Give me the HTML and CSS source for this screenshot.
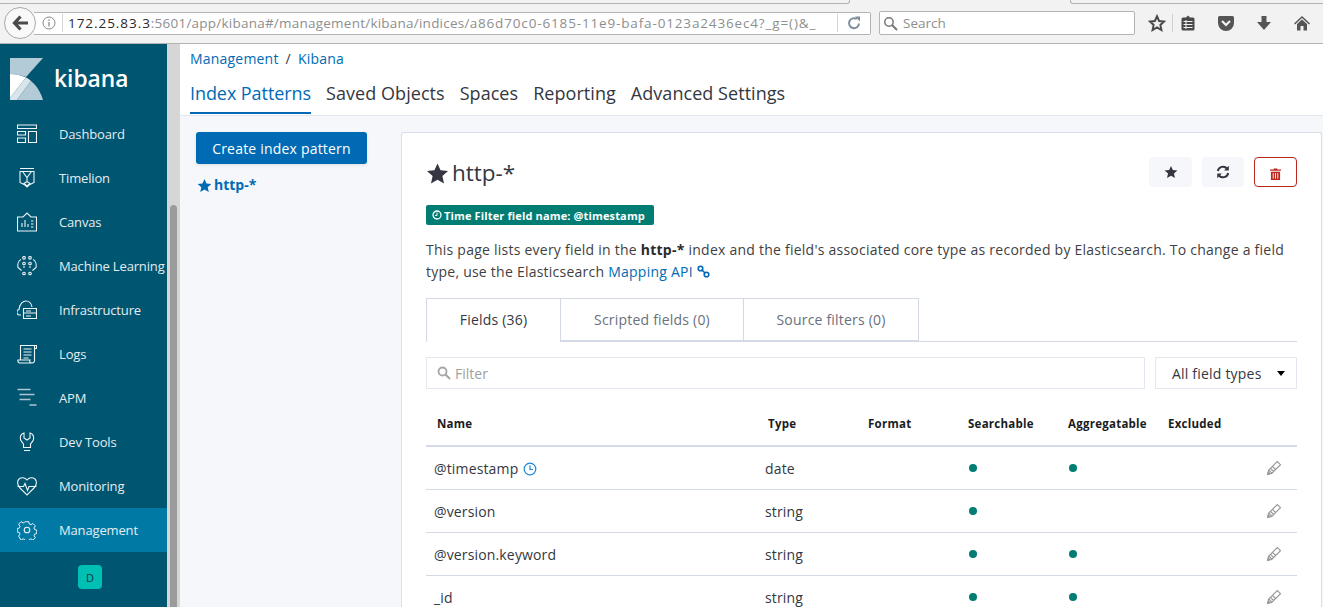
FILE: index.html
```html
<!DOCTYPE html>
<html lang="en">
<head>
<meta charset="utf-8">
<title>Kibana</title>
<link rel="stylesheet" href="styles.css">
</head>
<body>
<svg class="defs" width="0" height="0" aria-hidden="true">
  <defs>
    <symbol id="star" viewBox="0 0 24 24"><path d="M12 1.500l3.200 7.200 7.800.8-5.900 5.200 1.700 7.700L12 18.400l-6.800 4 1.700-7.700L1 9.500l7.800-.8z"/></symbol>
    <symbol id="pencil" viewBox="0 0 16 16"><path d="M1.500 14.500l1-4.300L11.300 1.500l3.200 3.200-8.800 8.800zM2.800 10l3.200 3.200M4.600 8.500l2.900 2.900M6.600 6.500l2.900 2.900" fill="none" stroke="#969696" stroke-width="1.100"/><path d="M1.500 14.500l.8-3.400 2.600 2.600z" fill="#969696"/></symbol>
  </defs>
</svg>

<header class="browser">
  <div class="back">
    <svg width="18" height="18" viewBox="0 0 18 18"><path d="M9.500 2.500L3.500 9l6 6.500M4 9h13" fill="none" stroke="#4a4a4a" stroke-width="3.200"/></svg>
  </div>
  <div class="url">
    <svg class="info" width="14" height="14" viewBox="0 0 14 14"><circle cx="7" cy="7" r="6" fill="none" stroke="#8a8a8a"/><path d="M7 6v4.500M7 3.500v1.500" stroke="#8a8a8a" stroke-width="1.300"/></svg>
    <span class="url-text"><b>172.25.83.3</b>:5601/app/kibana#/management/kibana/indices/<span class="url-id">a86d70c0-6185-11e9-bafa-0123a2436ec4?_g=()&amp;_</span></span>
    <svg class="reload" width="14" height="14" viewBox="0 0 14 14"><path d="M12 7.500A5 5 0 1 1 9.800 3" fill="none" stroke="#7e8c99" stroke-width="2"/><path d="M8 .5h5v5z" fill="#7e8c99"/></svg>
  </div>
  <div class="search">
    <svg width="15" height="15" viewBox="0 0 15 15"><circle cx="6" cy="6" r="4.200" fill="none" stroke="#777" stroke-width="1.500"/><path d="M9 9l5 5" stroke="#777" stroke-width="2"/></svg>
    <span>Search</span>
  </div>
  <div class="tools">
    <svg class="t-star" width="18" height="18" viewBox="0 0 24 24"><path d="M12 3l2.800 6.300 6.700.7-5 4.600 1.400 6.700-5.900-3.400-5.900 3.400 1.400-6.700-5-4.600 6.700-.7z" fill="none" stroke="#4a4a4a" stroke-width="2.600"/></svg>
    <i class="t-sep"></i>
    <svg class="t-clip" width="14" height="16" viewBox="0 0 14 16"><path d="M2 2.500h3L7 .5l2 2h3a1.500 1.500 0 0 1 1.500 1.500v10a1.500 1.500 0 0 1-1.500 1.500H2A1.500 1.500 0 0 1 .5 14V4A1.500 1.500 0 0 1 2 2.500z" fill="#4a4a4a"/><path d="M2.500 6.500h9M2.500 9.500h9M2.500 12.500h9M5 5v9" stroke="#f2f2f2"/></svg>
    <svg class="t-pocket" width="16" height="15" viewBox="0 0 16 15"><path d="M1.500 0h13A1.500 1.500 0 0 1 16 1.500V7A8 8 0 0 1 0 7V1.500A1.500 1.500 0 0 1 1.500 0z" fill="#555"/><path d="M4 5l4 4 4-4" fill="none" stroke="#f2f2f2" stroke-width="2.200"/></svg>
    <svg class="t-down" width="16" height="16" viewBox="0 0 16 16"><path d="M5.500 1h5v6H15l-7 8-7-8h4.500z" fill="#555"/></svg>
    <svg class="t-home" width="16" height="15" viewBox="0 0 16 15"><path d="M8 0l8 7.500-1 1L8 2 1 8.500l-1-1z" fill="#555"/><path d="M8 3.500l5 4.500v6.500H9.500V10h-3v4.500H3V8z" fill="#555"/></svg>
  </div>
</header>

<div class="app">
  <nav class="side">
    <div class="brand">
      <svg width="33" height="42" viewBox="0 0 33 42">
        <path d="M0 0h33L16 19C11 17 5 16 0 16z" fill="#b3cbd6"/>
        <path d="M0 16c5 0 11 1 16 3.500L0 40z" fill="#fff"/>
        <path d="M16 19.500c2 1 3.500 2 5 3.500L7 42H0v-2z" fill="#d9e5ea"/>
        <path d="M21 23c6 5 10 12 12 19H7z" fill="#b3cbd6"/>
      </svg>
      <span>kibana</span>
    </div>
    <a class="item"><svg class="ico" viewBox="0 0 20 20"><path d="M.5 1h19v3.500H.5zM.5 7.500h8v3.500h-8zM.5 14h8v4.500h-8zM11.500 7.500h8v11h-8z"/></svg>Dashboard</a>
    <a class="item"><svg class="ico" viewBox="0 0 20 20"><path d="M3 .5h14M3 3.500h14v11l-5 2.500-2 2-2-2-5-2.500zM5.500 3.500l4.500 6 4.500-6M10 9.500v5M7 15.500l3-2 3 2-3 2.500z"/></svg>Timelion</a>
    <a class="item"><svg class="ico" viewBox="0 0 20 20"><path d="M.5 5h5.500L10 1l4 4h5.500v14H.5zM5 15v-4M8 15V8M11 15v-3M14 9h2.500M14 12h2.500M14 15h2.500"/></svg>Canvas</a>
    <a class="item"><svg class="ico" viewBox="0 0 20 20"><circle cx="7" cy="1.800" r="1.300"/><circle cx="13" cy="1.800" r="1.300"/><circle cx="7" cy="7.500" r="1.300"/><circle cx="13" cy="7.500" r="1.300"/><circle cx="7" cy="17.500" r="1.300"/><circle cx="13" cy="17.500" r="1.300"/><path d="M4 3.500C1 5 .5 9 1 11.500l3.500 3M16 3.500c3 1.500 3.500 5.500 3 8l-3.500 3M7 10v2M13 10v2"/></svg>Machine Learning</a>
    <a class="item"><svg class="ico" viewBox="0 0 20 20"><path d="M4 15H3A2.800 2.800 0 0 1 2 9.500C2.500 4 6 1 9 1s5.500 2.500 6 6M6.500 8.500h13v10h-13zM6.500 13h13M9 11h5M9 16h5"/></svg>Infrastructure</a>
    <a class="item"><svg class="ico" viewBox="0 0 20 20"><path d="M3.500 16V1.500h14M17.500 1.500h2v3h-2zM17.500 1.500V16a2.500 2.500 0 0 1-2.500 3H2.500A2.500 2.500 0 0 1 1 16h12a2 2 0 0 0 2 3M6.500 5h8M6.500 8h8M6.500 11h8M6.500 14h5"/></svg>Logs</a>
    <a class="item"><svg class="ico apm" viewBox="0 0 20 20"><path d="M.5 1.500h13M2.500 6.500h15M2.500 11.500h11M12.500 17h7"/></svg>APM</a>
    <a class="item"><svg class="ico" viewBox="0 0 20 20"><path d="M7 1C4 2 3 5 3.500 7.500c.5 2 2 3 3 4.500v3.500h7V12c1-1.500 2.500-2.500 3-4.500C17 5 16 2 13 1v5l-3 2-3-2zM7 18.500h6"/></svg>Dev Tools</a>
    <a class="item"><svg class="ico" viewBox="0 0 20 20"><path d="M3 12C0 9 0 5 2 3c2.500-2 6-1.500 8 1 2-2.500 5.500-3 8-1 2 2 2 6-1 9l-7 7zM.5 10.500h6l1.500-3 2.500 7 1.500-4h7.500"/></svg>Monitoring</a>
    <a class="item active"><svg class="ico" viewBox="0 0 20 20"><path d="M8 .8h4l.5 2.600 1.800.8 2.200-1.500 2.800 2.800-1.500 2.200.7 1.800 2.300.5v4l-2.300.5-.7 1.800 1.500 2.200-2.800 2.800-2.200-1.500-1.800.8-.5 2.300H8l-.5-2.300-1.800-.8-2.200 1.500L.7 16.800l1.500-2.200-.7-1.800L-.8 12.300v-4l2.300-.5.7-1.800L.7 3.500l2.800-2.800 2.200 1.500 1.800-.8z" transform="translate(1 1) scale(.9)"/><circle cx="10" cy="10" r="2.800"/></svg>Management</a>
    <div class="avatar-row"><span class="avatar">D</span></div>
  </nav>
  <div class="track"><div class="thumb"></div></div>

  <main class="main">
    <div class="top">
      <div class="crumbs"><a>Management</a><span class="sep">/</span><a>Kibana</a></div>
      <div class="mtabs">
        <a class="mtab on">Index Patterns</a>
        <a class="mtab">Saved Objects</a>
        <a class="mtab">Spaces</a>
        <a class="mtab">Reporting</a>
        <a class="mtab">Advanced Settings</a>
      </div>
    </div>
    <div class="page">
      <aside class="left">
        <button class="create">Create index pattern</button>
        <a class="pattern"><svg width="15" height="15"><use href="#star"/></svg>http-*</a>
      </aside>
      <section class="panel">
        <div class="head">
          <h1><svg width="23" height="23"><use href="#star"/></svg>http-*</h1>
          <div class="actions">
            <button class="act"><svg width="14" height="14"><use href="#star"/></svg></button>
            <button class="act sync"><svg width="14" height="14" viewBox="0 0 14 14"><path d="M1.800 6A5.300 5.300 0 0 1 11 3.500M12.200 8A5.300 5.300 0 0 1 3 10.500" fill="none" stroke="#343741" stroke-width="2"/><path d="M12.800 .8v4.700H8.100zM1.200 13.200V8.500h4.700z" fill="#343741"/></svg></button>
            <button class="act del"><svg width="11" height="12" viewBox="0 0 12 13"><path d="M4 1.500V.5h4v1h4v1.500H0V1.500zM1 4h10v9H1z" fill="#bd271e"/><path d="M3.500 5.500v6M6 5.500v6M8.500 5.500v6" stroke="#fff"/></svg></button>
          </div>
        </div>
        <div class="badge"><svg width="10" height="10" viewBox="0 0 10 10"><circle cx="5" cy="5" r="4" fill="none" stroke="#fff" stroke-width="1.300"/><path d="M5 2.500V5.500H3" fill="none" stroke="#fff"/></svg>Time Filter field name: @timestamp</div>
        <p class="desc">This page lists every field in the <b>http-*</b> index and the field's associated core type as recorded by Elasticsearch. To change a field type, use the Elasticsearch <a>Mapping API</a> <svg class="link" width="13" height="13" viewBox="0 0 13 13"><circle cx="3.500" cy="3.500" r="2.300" fill="none" stroke="#006bb4" stroke-width="1.600"/><circle cx="9.500" cy="9.500" r="2.300" fill="none" stroke="#006bb4" stroke-width="1.600"/><path d="M4.500 4.500l4 4" stroke="#006bb4" stroke-width="1.600"/></svg></p>
        <div class="tabs">
          <a class="tab on">Fields (36)</a>
          <a class="tab t2">Scripted fields (0)</a>
          <a class="tab t3">Source filters (0)</a>
        </div>
        <div class="filters">
          <div class="filter">
            <svg width="14" height="14" viewBox="0 0 14 14"><circle cx="5.500" cy="5.500" r="4" fill="none" stroke="#a5a5a5" stroke-width="1.800"/><path d="M8.500 8.500l4.500 4.500" stroke="#a5a5a5" stroke-width="2"/></svg>
            <span>Filter</span>
          </div>
          <div class="select"><span>All field types</span><i class="caret"></i></div>
        </div>
        <table class="fields">
          <colgroup><col class="c-name"><col class="c-std"><col class="c-std"><col class="c-std"><col class="c-std"><col class="c-std"><col class="c-edit"></colgroup>
          <thead><tr><th>Name</th><th>Type</th><th>Format</th><th>Searchable</th><th>Aggregatable</th><th>Excluded</th><th></th></tr></thead>
          <tbody>
            <tr><td>@timestamp <svg class="clock" width="14" height="14" viewBox="0 0 14 14"><circle cx="7" cy="7" r="5.800" fill="none" stroke="#1a85d6" stroke-width="1.200"/><path d="M7 3.500V7.500H10" fill="none" stroke="#1a85d6" stroke-width="1.200"/></svg></td><td>date</td><td></td><td><i class="dot"></i></td><td><i class="dot"></i></td><td></td><td class="edit"><svg width="16" height="16"><use href="#pencil"/></svg></td></tr>
            <tr><td>@version</td><td>string</td><td></td><td><i class="dot"></i></td><td></td><td></td><td class="edit"><svg width="16" height="16"><use href="#pencil"/></svg></td></tr>
            <tr><td>@version.keyword</td><td>string</td><td></td><td><i class="dot"></i></td><td><i class="dot"></i></td><td></td><td class="edit"><svg width="16" height="16"><use href="#pencil"/></svg></td></tr>
            <tr><td>_id</td><td>string</td><td></td><td><i class="dot"></i></td><td><i class="dot"></i></td><td></td><td class="edit"><svg width="16" height="16"><use href="#pencil"/></svg></td></tr>
          </tbody>
        </table>
      </section>
    </div>
  </main>
</div>
</body>
</html>
```
FILE: styles.css
```css
* { box-sizing: border-box; }
html, body { margin: 0; height: 100%; overflow: hidden; }
body { font-family: "Open Sans", sans-serif; color: #343741; background: #fff; font-size: 14px; }
.defs { position: absolute; }
a { color: inherit; text-decoration: none; }
button { font-family: inherit; }

.browser { position: relative; height: 44px; display: flex; align-items: center; background: #f2f2f2; border-bottom: 1px solid #b4b4b4; padding: 3px 0 0 4px; }
.browser::before, .browser::after { content: ""; position: absolute; top: 0; height: 3px; border-bottom: 1px solid #b4b4b4; }
.browser::before { left: 0; width: 849px; border-right: 1px solid #b4b4b4; border-bottom-right-radius: 3px; }
.browser::after { right: 0; width: 252px; border-left: 1px solid #b4b4b4; border-bottom-left-radius: 3px; }
.back { width: 32px; height: 32px; border: 1px solid #a9a9a9; border-radius: 50%; background: #f9f9f9; display: flex; align-items: center; justify-content: center; position: relative; z-index: 1; flex: none; }
.url { width: 837px; height: 23px; margin-left: -2px; background: #fff; border: 1px solid #b4b4b4; border-left: 0; border-radius: 0 2px 2px 0; display: flex; align-items: center; padding-left: 8px; flex: none; }
.info { flex: none; margin-right: 6px; }
.url-text { font-size: 13.500px; color: #8e8e8e; white-space: nowrap; overflow: hidden; width: 776px; letter-spacing: .23px; border-left: 1px solid #d5d5d5; border-right: 1px solid #d5d5d5; padding-left: 5px; line-height: 18px; flex: none; }
.url-text b { font-weight: 400; color: #2a2a2a; letter-spacing: .95px; }
.url-id { letter-spacing: .85px; }
.reload { margin-left: 9px; flex: none; }
.search { width: 256px; height: 24px; margin-left: 8px; background: #fff; border: 1px solid #b4b4b4; border-radius: 2px; display: flex; align-items: center; gap: 5px; padding-left: 3px; color: #8e8e8e; font-size: 13.500px; flex: none; }
.tools { display: flex; align-items: center; margin-left: 13px; }
.t-sep { width: 1px; height: 18px; background: #d0d0d0; margin-left: 6px; }
.t-clip { margin-left: 8px; }
.t-pocket { margin-left: 23px; }
.t-down { margin-left: 22px; }
.t-home { margin-left: 22px; }

.app { display: flex; height: 563px; }
.side { width: 167px; background: #005571; flex: none; overflow: hidden; }
.brand { height: 68px; padding: 14px 0 0 10px; display: flex; align-items: flex-start; gap: 11px; color: #fff; }
.brand span { font-size: 22.800px; font-weight: 600; line-height: 44px; margin-top: -1px; }
.item { display: flex; align-items: center; height: 44px; padding-left: 59px; font-size: 13px; letter-spacing: -.15px; color: #e4edf0; position: relative; white-space: nowrap; }
.item.active { background: #0079a5; }
.ico { position: absolute; left: 17px; top: 12px; width: 20px; height: 20px; fill: none; stroke: #f0f5f7; stroke-width: 1.100; }
.ico.apm { stroke: #a9c6d1; stroke-width: 1.500; }
.avatar-row { padding: 13px 0 0 78px; }
.avatar { width: 24px; height: 24px; border-radius: 4px; background: #00bfb3; color: #10333f; font-size: 11px; display: flex; align-items: center; justify-content: center; }
.track { width: 13px; background: #d6d6d6; flex: none; padding: 161px 3px 0; }
.thumb { height: 100%; background: #9b9b9b; border-radius: 4px 4px 0 0; }

.main { flex: 1; min-width: 0; background: #f5f7fa; display: flex; flex-direction: column; }
.top { height: 72px; background: #fff; padding: 5px 0 0 10px; border-bottom: 1px solid #e4e7ef; }
.crumbs { display: flex; gap: 7px; color: #006bb4; font-size: 14px; letter-spacing: .2px; line-height: 20px; }
.sep { color: #343741; }
.mtabs { display: flex; gap: 15px; margin-top: 10px; }
.mtab { font-size: 18px; line-height: 25px; height: 35px; padding-top: 2px; color: #343741; letter-spacing: .05px; }
.mtab.on { color: #006bb4; border-bottom: 2px solid #006bb4; letter-spacing: -.07px; }

.page { display: flex; padding: 16px 1px 0 16px; min-height: 0; flex: 1; }
.left { width: 205px; flex: none; }
.create { display: block; width: 171px; height: 32px; background: #006bb4; color: #fff; border: 0; border-radius: 3px; font-size: 14px; letter-spacing: .2px; padding: 0; box-shadow: 0 1px 3px rgba(0,0,0,.1); }
.pattern { display: flex; align-items: center; gap: 2px; margin: 11px 0 0; padding-left: 1px; color: #006bb4; font-weight: 700; font-size: 14px; line-height: 20px; }
.pattern svg { fill: #006bb4; }
.panel { flex: 1; background: #fff; border: 1px solid #d8dfe9; border-bottom: 0; border-radius: 3px 3px 0 0; padding: 24px 24px 0; min-width: 0; overflow: hidden; }
.head { display: flex; justify-content: space-between; align-items: flex-start; height: 48px; }
h1 { margin: 0; display: flex; align-items: center; gap: 3px; font-size: 22.500px; font-weight: 400; line-height: 32px; color: #343741; }
h1 svg { fill: #343741; }
.actions { display: flex; gap: 10px; }
.act { width: 43px; height: 30px; background: #f5f7fa; border: 0; border-radius: 4px; padding: 0; display: flex; align-items: center; justify-content: center; }
.act svg { fill: #343741; }
.sync { width: 42px; }
.del { background: #fff; border: 1px solid #bd271e; padding-top: 3px; }
.badge { display: inline-flex; align-items: center; gap: 2px; height: 20px; width: 228px; background: #017d73; color: #fff; font-size: 11px; font-weight: 700; padding-left: 6px; border-radius: 2px; white-space: nowrap; letter-spacing: .14px; }
.desc { margin: 14px 0 0; font-size: 14px; letter-spacing: .24px; line-height: 22px; color: #3f3f3f; }
.desc b { font-weight: 700; color: #2a2a2a; }
.desc a { color: #006bb4; }
.link { vertical-align: -1px; }
.tabs { display: flex; height: 44px; margin-top: 15px; border-bottom: 1px solid #d3dae6; }
.tab { height: 43px; display: flex; align-items: center; justify-content: center; border: 1px solid #d3dae6; border-left: 0; color: #69707d; font-size: 14px; letter-spacing: .2px; }
.tab.on { width: 135px; height: 44px; padding-bottom: 3px; border-left: 1px solid #d3dae6; border-bottom: 0; background: #fff; color: #343741; }
.t2 { width: 183px; }
.t3 { width: 175px; }
.filters { display: flex; gap: 10px; margin-top: 15px; }
.filter { flex: 1; height: 32px; border: 1px solid #e4e7ef; display: flex; align-items: center; gap: 4px; padding-left: 10px; font-size: 14px; }
.filter span { color: #a1a1a1; margin-top: 1px; }
.select { width: 142px; height: 32px; border: 1px solid #e4e7ef; display: flex; align-items: center; justify-content: space-between; padding: 0 11px 0 16px; color: #343741; font-size: 14px; letter-spacing: .2px; }
.caret { width: 0; height: 0; border: 4px solid transparent; border-top: 5px solid #000; border-bottom: 0; }
.fields { width: 100%; table-layout: fixed; border-collapse: collapse; margin-top: 18px; }
.c-name { width: 331px; }
.c-std { width: 100px; }
.c-edit { width: 40px; }
th { height: 39px; text-align: left; font-size: 11.500px; letter-spacing: .25px; font-weight: 700; color: #1a1c21; padding: 0 0 5px 11px; border-bottom: 2px solid #d3dae6; white-space: nowrap; }
td { height: 43px; padding: 2px 0 0 8px; font-size: 14px; letter-spacing: .15px; color: #343741; border-bottom: 1px solid #d3dae6; vertical-align: middle; line-height: 20px; white-space: nowrap; }
.clock { vertical-align: -2px; margin-left: 1px; }
.dot { display: block; width: 8px; height: 8px; border-radius: 50%; background: #017d73; margin: -2px 0 0 4px; }
.edit { text-align: right; padding: 0 15px 0 0; }
.edit svg { vertical-align: -3px; }
```
